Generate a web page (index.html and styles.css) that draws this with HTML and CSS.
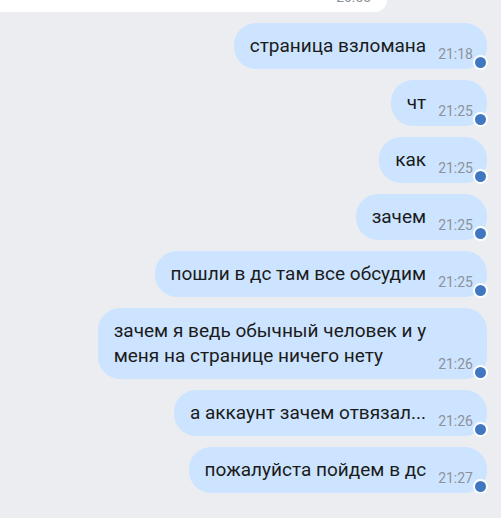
FILE: index.html
```html
<!DOCTYPE html>
<html lang="ru">
<head>
<meta charset="utf-8">
<link rel="stylesheet" href="styles.css">
</head>
<body>
<div class="chat">
  <div class="prev"><span class="prev-time">20:55</span></div>
  <div class="msg"><div class="bubble"><span class="text">страница взломана</span><span class="time">21:18</span><span class="dot"></span></div></div>
  <div class="msg"><div class="bubble"><span class="text">чт</span><span class="time">21:25</span><span class="dot"></span></div></div>
  <div class="msg"><div class="bubble"><span class="text">как</span><span class="time">21:25</span><span class="dot"></span></div></div>
  <div class="msg"><div class="bubble"><span class="text">зачем</span><span class="time">21:25</span><span class="dot"></span></div></div>
  <div class="msg"><div class="bubble"><span class="text">пошли в дс там все обсудим</span><span class="time">21:25</span><span class="dot"></span></div></div>
  <div class="msg"><div class="bubble"><span class="text">зачем я ведь обычный человек и у<br>меня на странице ничего нету</span><span class="time">21:26</span><span class="dot"></span></div></div>
  <div class="msg"><div class="bubble"><span class="text">а аккаунт зачем отвязал...</span><span class="time">21:26</span><span class="dot"></span></div></div>
  <div class="msg"><div class="bubble"><span class="text">пожалуйста пойдем в дс</span><span class="time">21:27</span><span class="dot"></span></div></div>
</div>
</body>
</html>
```
FILE: styles.css
```css
html, body {
  margin: 0;
  padding: 0;
  background: #ebedf0;
  font-family: Roboto, "Noto Sans", sans-serif;
}
.chat {
  display: flex;
  flex-direction: column;
  gap: 11px;
  padding: 0 14px 0 0;
}
.prev {
  height: 12px;
  width: 407px;
  margin-left: -20px;
  margin-bottom: 0;
  background: #ffffff;
  border-radius: 0 0 22px 22px;
  position: relative;
  overflow: hidden;
}
.prev-time {
  position: absolute;
  right: 16px;
  top: -11px;
  font-size: 14px;
  color: #8b939c;
}
.msg {
  display: flex;
  justify-content: flex-end;
}
.bubble {
  position: relative;
  display: flex;
  align-items: flex-end;
  background: #cce4ff;
  border-radius: 22px;
  padding: 10px 14px 8px 16px;
}
.text {
  font-size: 19px;
  line-height: 25px;
  color: #1b1b1b;
  margin-bottom: 3px;
}
.time {
  font-size: 14px;
  line-height: 14px;
  color: #8c929a;
  margin-left: 12px;
}
.dot {
  position: absolute;
  right: -1px;
  bottom: -1px;
  width: 11px;
  height: 11px;
  border-radius: 50%;
  background: #4177c1;
  border: 2px solid #ffffff;
}
```
